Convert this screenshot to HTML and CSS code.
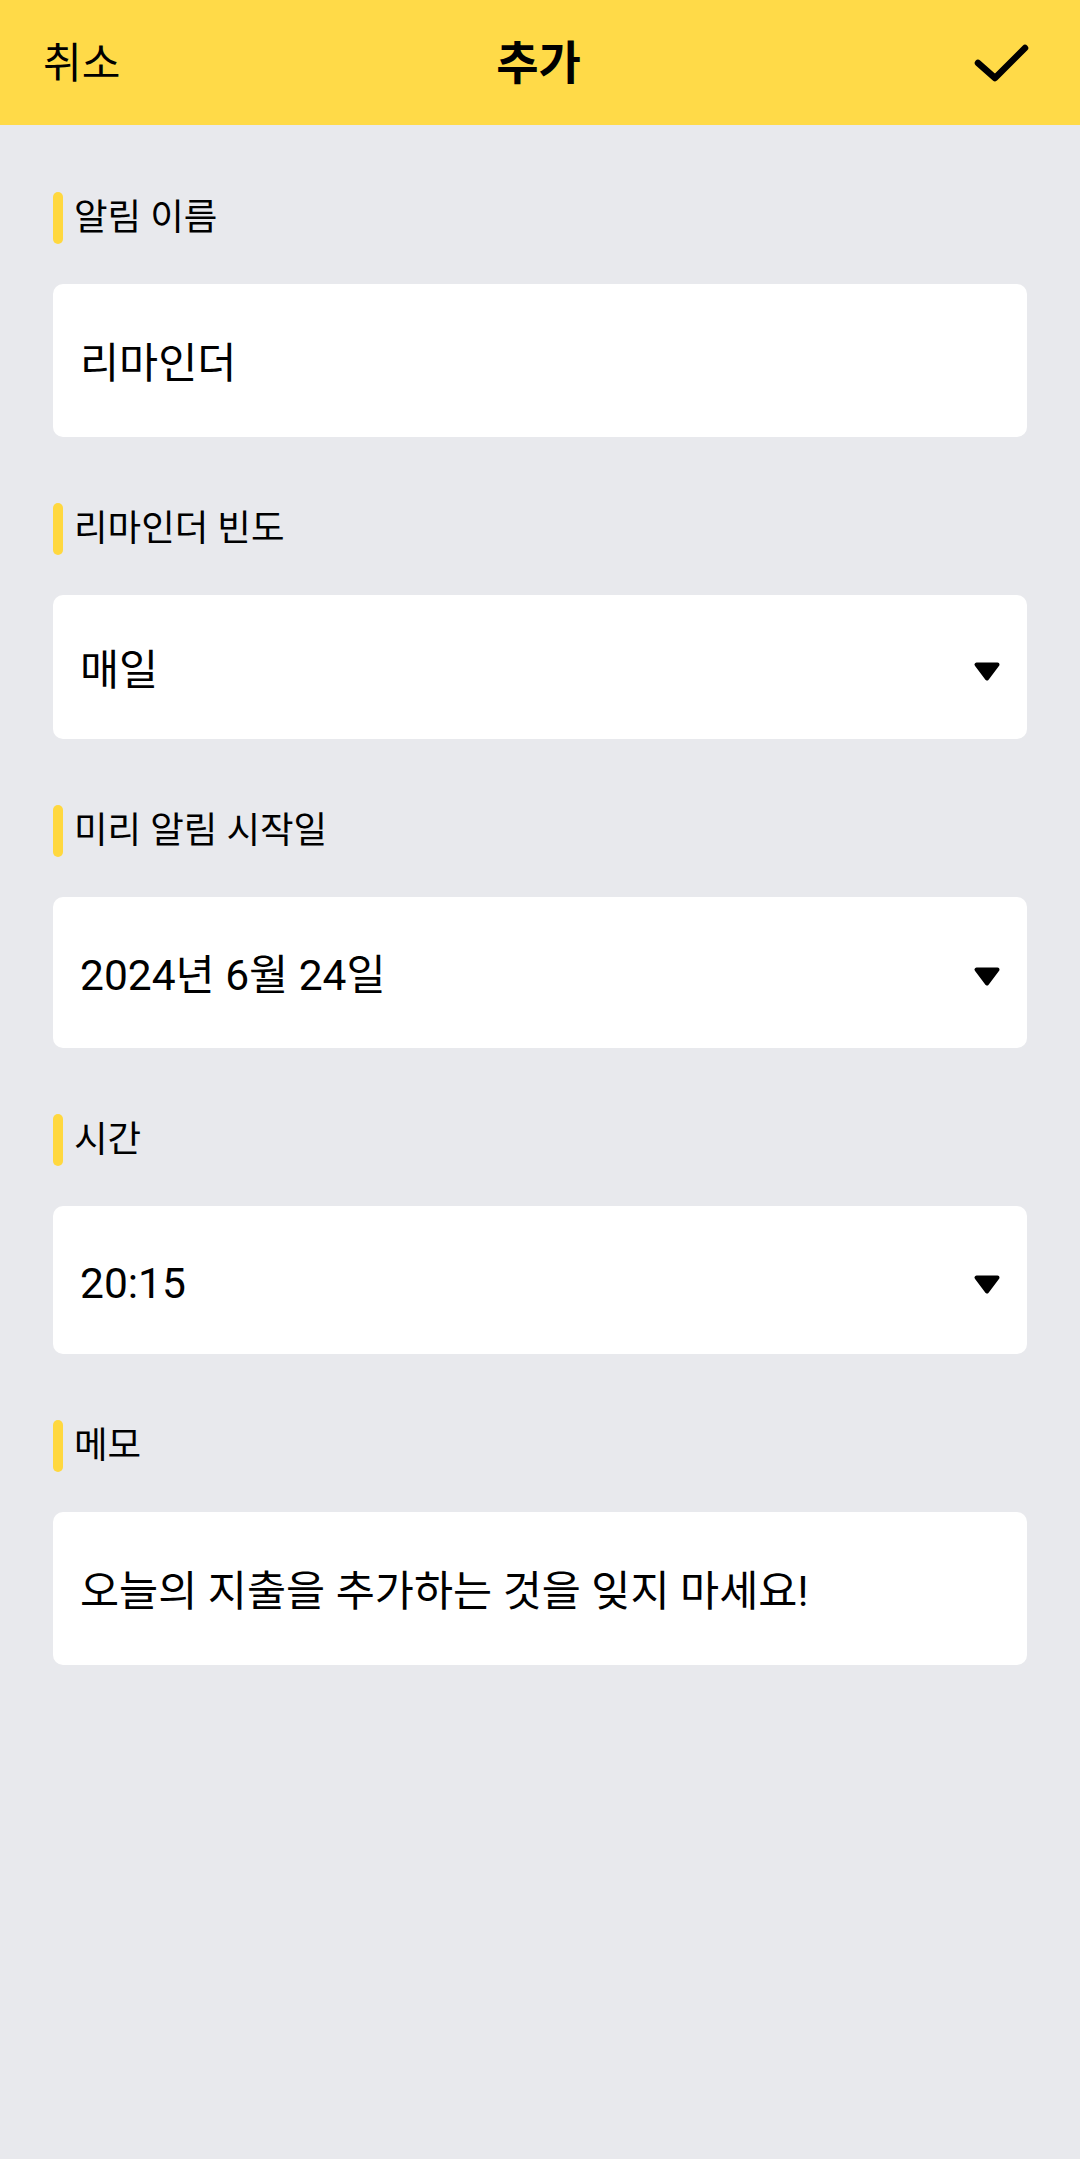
FILE: index.html
```html
<!DOCTYPE html>
<html lang="ko">
<head>
<meta charset="utf-8">
<title>추가</title>
<link rel="stylesheet" href="styles.css">
</head>
<body>
<header class="topbar">
  <div class="topbar-left">취소</div>
  <h1 class="topbar-title">추가</h1>
  <div class="topbar-right">
    <svg class="check" width="64" height="44" viewBox="0 0 64 44" aria-hidden="true">
      <path d="M8 22 L25 37 L55 7" fill="none" stroke="#000" stroke-width="6.5" stroke-linecap="round" stroke-linejoin="round"/>
    </svg>
  </div>
</header>

<main class="form">
  <section class="group">
    <div class="label"><span class="label-bar"></span><span class="label-text">알림 이름</span></div>
    <div class="field field-text"><span class="value">리마인더</span></div>
  </section>

  <section class="group">
    <div class="label"><span class="label-bar"></span><span class="label-text">리마인더 빈도</span></div>
    <div class="field field-select"><span class="value">매일</span>
      <svg class="caret" width="28" height="21" viewBox="0 0 28 21" aria-hidden="true"><path d="M3.5 3.5 H24.5 L14 17.5 Z" fill="#000" stroke="#000" stroke-width="4" stroke-linejoin="round"/></svg>
    </div>
  </section>

  <section class="group">
    <div class="label"><span class="label-bar"></span><span class="label-text">미리 알림 시작일</span></div>
    <div class="field field-date"><span class="value">2024년 6월 24일</span>
      <svg class="caret" width="28" height="21" viewBox="0 0 28 21" aria-hidden="true"><path d="M3.5 3.5 H24.5 L14 17.5 Z" fill="#000" stroke="#000" stroke-width="4" stroke-linejoin="round"/></svg>
    </div>
  </section>

  <section class="group">
    <div class="label"><span class="label-bar"></span><span class="label-text">시간</span></div>
    <div class="field field-time"><span class="value">20:15</span>
      <svg class="caret" width="28" height="21" viewBox="0 0 28 21" aria-hidden="true"><path d="M3.5 3.5 H24.5 L14 17.5 Z" fill="#000" stroke="#000" stroke-width="4" stroke-linejoin="round"/></svg>
    </div>
  </section>

  <section class="group">
    <div class="label"><span class="label-bar"></span><span class="label-text">메모</span></div>
    <div class="field field-text"><span class="value">오늘의 지출을 추가하는 것을 잊지 마세요!</span></div>
  </section>
</main>
</body>
</html>
```

FILE: styles.css
```css
* { box-sizing: border-box; }

html, body {
  margin: 0;
  padding: 0;
}

body {
  width: 1080px;
  min-height: 2159px;
  background: #e8e9ed;
  font-family: Roboto, "Noto Sans CJK KR", sans-serif;
  color: #000;
}

.topbar {
  height: 125px;
  background: #ffda48;
  display: grid;
  grid-template-columns: 1fr auto 1fr;
  align-items: center;
  padding: 0 46px 0 43px;
}

.topbar-left {
  font-size: 42px;
  line-height: 1;
  padding-top: 2px;
}

.topbar-title {
  margin: 0;
  font-size: 46px;
  font-weight: 700;
  line-height: 1;
}

.topbar-right {
  display: flex;
  justify-content: flex-end;
}

.check { display: block; }

.form {
  padding: 67px 53px 0 53px;
  display: flex;
  flex-direction: column;
  gap: 66px;
}

.group {
  display: flex;
  flex-direction: column;
  gap: 40px;
}

.label {
  height: 52px;
  display: flex;
  align-items: center;
  gap: 11px;
}

.label-bar {
  width: 10px;
  height: 52px;
  border-radius: 5px;
  background: #ffd83f;
  flex: none;
}

.label-text {
  font-size: 36.5px;
  line-height: 1;
}

.field {
  background: #fff;
  border-radius: 10px;
  display: flex;
  align-items: center;
  justify-content: space-between;
  padding: 8px 26px 0 27px;
}

.field-text { height: 153px; }
.field-select { height: 144px; }
.field-date { height: 151px; }
.field-time { height: 148px; }

.value {
  font-size: 42.5px;
  line-height: 1;
}

.caret {
  display: block;
  flex: none;
}
```
